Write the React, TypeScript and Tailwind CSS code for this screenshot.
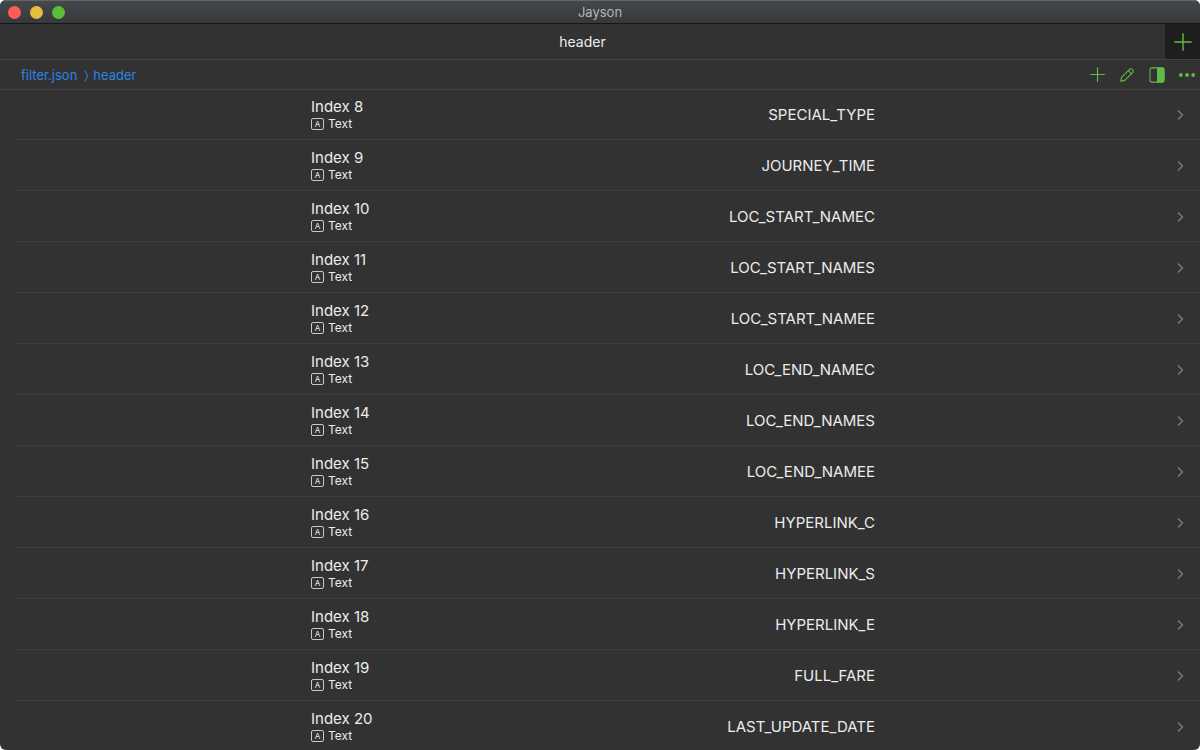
const rows = [
  { index: 8, value: 'SPECIAL_TYPE' },
  { index: 9, value: 'JOURNEY_TIME' },
  { index: 10, value: 'LOC_START_NAMEC' },
  { index: 11, value: 'LOC_START_NAMES' },
  { index: 12, value: 'LOC_START_NAMEE' },
  { index: 13, value: 'LOC_END_NAMEC' },
  { index: 14, value: 'LOC_END_NAMES' },
  { index: 15, value: 'LOC_END_NAMEE' },
  { index: 16, value: 'HYPERLINK_C' },
  { index: 17, value: 'HYPERLINK_S' },
  { index: 18, value: 'HYPERLINK_E' },
  { index: 19, value: 'FULL_FARE' },
  { index: 20, value: 'LAST_UPDATE_DATE' },
];

function PlusIcon({ className }: { className: string }) {
  return (
    <svg viewBox="0 0 18 18" className={className} fill="none" stroke="currentColor" strokeWidth="1.4" strokeLinecap="round" aria-hidden="true">
      <path d="M9 .8v16.4M.8 9h16.4" />
    </svg>
  );
}

function PencilIcon() {
  return (
    <svg viewBox="0 0 14 14" className="size-3.5" fill="none" stroke="currentColor" strokeWidth="1.1" strokeLinejoin="round" aria-hidden="true">
      <path d="M.7 13.3l.9-4L9.7 1.2c.6-.6 1.5-.6 2.1 0l1 1c.6.6.6 1.5 0 2.1l-8.1 8.1z" />
      <path d="M8.3 2.6l3.1 3.1" />
    </svg>
  );
}

function SplitIcon() {
  return (
    <svg viewBox="0 0 16 16" className="size-4" aria-hidden="true">
      <rect x="1" y=".9" width="14" height="14.2" rx="2" fill="none" stroke="currentColor" strokeWidth="1.1" />
      <path d="M8 .4h5.2a2.3 2.3 0 0 1 2.3 2.3v10.6a2.3 2.3 0 0 1-2.3 2.3H8z" fill="currentColor" />
    </svg>
  );
}

function DotsIcon() {
  return (
    <svg viewBox="0 0 18 4" className="h-1 w-[18px]" fill="currentColor" aria-hidden="true">
      <circle cx="2" cy="2" r="2" />
      <circle cx="8.5" cy="2" r="2" />
      <circle cx="15" cy="2" r="2" />
    </svg>
  );
}

function Chevron() {
  return (
    <svg viewBox="0 0 8 12" className="h-3 w-2" fill="none" stroke="currentColor" strokeWidth="1.6" aria-hidden="true">
      <path d="M2 1.5L6.4 6 2 10.5" />
    </svg>
  );
}

function TitleBar() {
  return (
    <header className="grid h-6 shrink-0 grid-cols-[1fr_auto_1fr] items-center border-t border-b border-t-[#626668] border-b-[#161616] bg-linear-to-b from-[#44484a] to-[#36393b]">
      <div className="flex gap-[9px] pl-2">
        <button type="button" aria-label="Close" className="size-[13px] rounded-full bg-[#fc5b57]" />
        <button type="button" aria-label="Minimize" className="size-[13px] rounded-full bg-[#e5bf3c]" />
        <button type="button" aria-label="Zoom" className="size-[13px] rounded-full bg-[#57c038]" />
      </div>
      <h1 className="text-[13px] leading-5 text-[#b4b6b7]">Jayson</h1>
    </header>
  );
}

function TabBar() {
  return (
    <div className="flex h-9 shrink-0 border-b border-[#434343]">
      <button type="button" className="flex-1 text-sm text-[#ececec]">header</button>
      <button type="button" aria-label="New tab" className="flex w-[35px] items-center justify-center bg-[#1e1e1e] text-[#62ba46]">
        <PlusIcon className="size-[18px]" />
      </button>
    </div>
  );
}

function Toolbar() {
  return (
    <div className="flex h-[30px] shrink-0 items-center justify-between border-b border-[#434343] pr-1 pl-[21px]">
      <nav aria-label="Breadcrumb" className="flex items-center pt-0.5 text-[13px] text-[#2b84e6]">
        <a href="#root">filter.json</a>
        <svg viewBox="0 0 5 12" className="mr-1 ml-[7px] h-3 w-[5px]" fill="none" stroke="currentColor" strokeWidth="1" aria-hidden="true">
          <path d="M1 .5l2.5 5.5L1 11.5" />
        </svg>
        <a href="#header">header</a>
      </nav>
      <div className="flex items-center gap-3.5 text-[#62ba46]">
        <button type="button" aria-label="Add" className="flex w-4 justify-center"><PlusIcon className="size-[15px]" /></button>
        <button type="button" aria-label="Edit" className="flex w-4 justify-center"><PencilIcon /></button>
        <button type="button" aria-label="Split view" className="flex w-4 justify-center"><SplitIcon /></button>
        <button type="button" aria-label="More" className="flex w-[17px] justify-center"><DotsIcon /></button>
      </div>
    </div>
  );
}

export default function App() {
  return (
    <div className="h-screen bg-white font-['Inter','Liberation_Sans',sans-serif]">
      <div className="flex h-full flex-col overflow-hidden rounded-md bg-[#323232]">
        <TitleBar />
        <TabBar />
        <Toolbar />
        <main className="min-h-0 flex-1 overflow-hidden">
          <ul className="-mt-px pl-4">
            {rows.map((row) => (
              <li key={row.index} className="border-b border-[#3d3d3d]">
                <button type="button" className="flex h-[50px] w-full items-center pt-px pr-4 text-left text-[#ececec]">
                  <span className="flex flex-1 justify-center pr-1.5">
                    <span className="flex w-full max-w-[564px] items-center justify-between">
                      <span>
                        <span className="block text-[15px] leading-[18px]">Index {row.index}</span>
                        <span className="flex items-center gap-1 text-xs leading-4">
                          <span className="flex h-3 w-[13px] items-center justify-center rounded-xs border border-[#c8c8c8] text-[8px] leading-none">A</span>
                          Text
                        </span>
                      </span>
                      <span className="text-[15px] leading-5">{row.value}</span>
                    </span>
                  </span>
                  <span className="text-[#777777]"><Chevron /></span>
                </button>
              </li>
            ))}
          </ul>
        </main>
      </div>
    </div>
  );
}
